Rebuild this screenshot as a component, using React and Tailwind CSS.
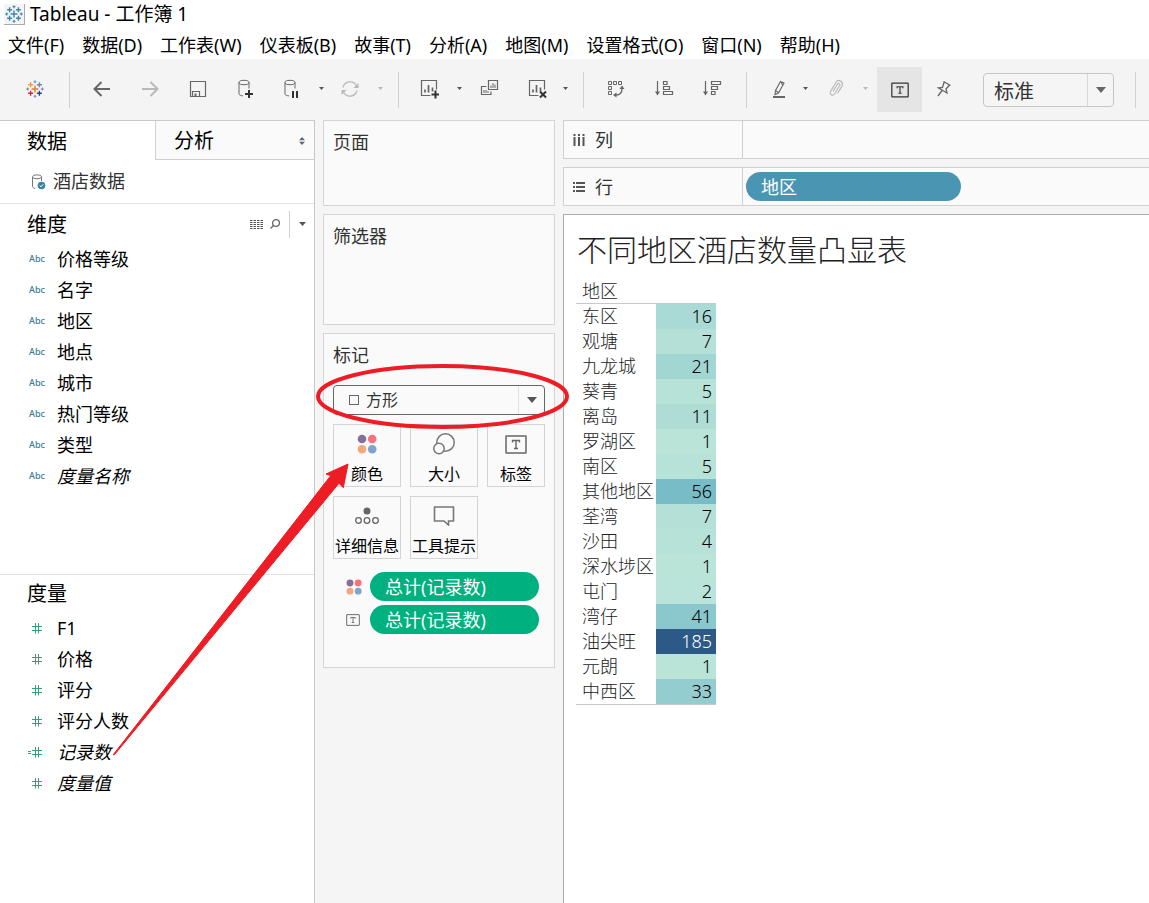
import React from "react";

const MENUS = ["文件(F)", "数据(D)", "工作表(W)", "仪表板(B)", "故事(T)", "分析(A)", "地图(M)", "设置格式(O)", "窗口(N)", "帮助(H)"];

const DIMENSIONS = [
  { name: "价格等级" },
  { name: "名字" },
  { name: "地区" },
  { name: "地点" },
  { name: "城市" },
  { name: "热门等级" },
  { name: "类型" },
  { name: "度量名称", italic: true },
];

const MEASURES = [
  { name: "F1" },
  { name: "价格" },
  { name: "评分" },
  { name: "评分人数" },
  { name: "记录数", italic: true, calc: true },
  { name: "度量值", italic: true },
];

const ROWS = [
  ["东区", 16, "bg-[#a9dad5]"],
  ["观塘", 7, "bg-[#b4e0d7]"],
  ["九龙城", 21, "bg-[#a2d6d3]"],
  ["葵青", 5, "bg-[#b6e2d8]"],
  ["离岛", 11, "bg-[#afddd6]"],
  ["罗湖区", 1, "bg-[#bbe4d9]"],
  ["南区", 5, "bg-[#b6e2d8]"],
  ["其他地区", 56, "bg-[#78bcc8]"],
  ["荃湾", 7, "bg-[#b4e0d7]"],
  ["沙田", 4, "bg-[#b7e2d8]"],
  ["深水埗区", 1, "bg-[#bbe4d9]"],
  ["屯门", 2, "bg-[#bae4d9]"],
  ["湾仔", 41, "bg-[#8ac8cd]"],
  ["油尖旺", 185, "bg-[#2c5985]"],
  ["元朗", 1, "bg-[#bbe4d9]"],
  ["中西区", 33, "bg-[#94cdcf]"],
];

function Logo({ colors, className }) {
  const [main, a, b, c, d, e, f] = colors;
  const plus = (x, y, r) => `M${x - r} ${y}h${2 * r}M${x} ${y - r}v${2 * r}`;
  return (
    <svg viewBox="0 0 18 18" className={className} fill="none" strokeWidth="1.4" aria-hidden="true">
      <path d={plus(9, 9, 3.4)} stroke={main} />
      <path d={plus(4.6, 4.7, 2.5)} stroke={a} />
      <path d={plus(13.4, 4.7, 2.5)} stroke={b} />
      <path d={plus(4.6, 13.3, 2.5)} stroke={c} />
      <path d={plus(13.4, 13.3, 2.5)} stroke={d} />
      <path d={plus(9, 1.8, 1.5) + plus(9, 16.2, 1.5)} stroke={e} strokeWidth="1.1" />
      <path d={plus(1.7, 9, 1.5) + plus(16.3, 9, 1.5)} stroke={f} strokeWidth="1.1" />
    </svg>
  );
}

function Icon({ children, className = "h-5 w-5", stroke = "#666" }) {
  return (
    <svg viewBox="0 0 20 20" className={className} fill="none" stroke={stroke} strokeWidth="1" aria-hidden="true">
      {children}
    </svg>
  );
}

function Caret({ color = "#555", className = "h-[3px] w-[5px]" }) {
  return (
    <svg viewBox="0 0 10 5" preserveAspectRatio="none" className={className} aria-hidden="true">
      <path d="M0 0h10L5 5z" fill={color} />
    </svg>
  );
}

function Tool({ label, className = "w-12", children }) {
  return (
    <button type="button" aria-label={label} className={`flex h-11 shrink-0 items-center justify-center pb-0.5 ${className}`}>
      {children}
    </button>
  );
}

function Divider({ className = "" }) {
  return <div className={`h-9 w-px shrink-0 bg-[#d0d0d0] ${className}`} />;
}

function LabelIcon({ className, color = "#666" }) {
  return (
    <svg viewBox="0 0 22 19" className={className} fill="none" stroke={color} aria-hidden="true">
      <rect x="1" y="1" width="20" height="17" rx="0.5" strokeWidth="1.5" />
      <path d="M7.5 7.5V5.5h7v2M11 5.5v8M9 13.5h4" strokeWidth="1.4" />
    </svg>
  );
}

function ColorIcon({ className }) {
  return (
    <svg viewBox="0 0 20 20" className={className} aria-hidden="true">
      <circle cx="5" cy="5" r="4.3" fill="#866f9b" />
      <circle cx="15.2" cy="5" r="4.3" fill="#f7717f" />
      <circle cx="5" cy="15.2" r="4.3" fill="#f3a77c" />
      <circle cx="15.2" cy="15.2" r="4.3" fill="#82a4cb" />
    </svg>
  );
}

function Cylinder() {
  return (
    <>
      <ellipse cx="8" cy="3.5" rx="5" ry="2.2" />
      <path d="M3 3.5v11.3c0 1.2 1.7 1.9 4 2.1M13 3.5v6" />
    </>
  );
}

function ChartFrame() {
  return (
    <>
      <path d="M11.5 16.5h-9v-15h15v9" strokeWidth="1.2" />
      <path d="M6 13.5v-3M9.5 13.5v-7.5M13.5 12.5v-4" strokeWidth="1.7" />
    </>
  );
}

function Toolbar() {
  return (
    <div role="toolbar" className="flex h-[61px] items-center overflow-hidden bg-[#f4f4f4] pl-[11px]">
      <Tool label="开始页面">
        <Logo className="h-[18px] w-[18px]" colors={["#eb7b30", "#ec9a3c", "#5c8ea5", "#c72f45", "#28467c", "#7a96b5", "#7b7fae"]} />
      </Tool>
      <Divider className="ml-[10px]" />
      <Tool label="撤消" className="ml-2 w-12">
        <Icon><path d="M18 10H2.500M9.500 3L2.500 10l7 7" strokeWidth="2" /></Icon>
      </Tool>
      <Tool label="重做">
        <Icon stroke="#b8b8b8"><path d="M2 10h15.5M10.5 3l7 7-7 7" strokeWidth="2" /></Icon>
      </Tool>
      <Tool label="保存">
        <Icon>
          <path d="M2.5 2.5h15v15h-15z" strokeWidth="1.2" />
          <path d="M4.5 17v-4.5h7V17" strokeWidth="1.2" />
          <path d="M6.5 14.5h2V17h-2z" fill="#666" stroke="none" />
        </Icon>
      </Tool>
      <Tool label="新建数据源">
        <Icon>
          <Cylinder />
          <path d="M9 15h8M13 11v8" stroke="#333" strokeWidth="2" />
        </Icon>
      </Tool>
      <Tool label="暂停自动更新" className="w-11">
        <Icon>
          <Cylinder />
          <path d="M11 12v7M15 12v7" stroke="#333" strokeWidth="2" />
        </Icon>
      </Tool>
      <Tool label="自动更新选项" className="w-3.5"><Caret /></Tool>
      <Tool label="运行更新" className="w-11">
        <Icon stroke="#b8b8b8">
          <path d="M3 8.5a7.200 7.200 0 0 1 13.5-1.5M17 11.5a7.200 7.200 0 0 1-13.5 1.5" strokeWidth="1.2" />
          <path d="M18.500 4v5h-5zM1.500 16v-5h5z" fill="#b8b8b8" stroke="none" />
        </Icon>
      </Tool>
      <Tool label="更新选项" className="w-4"><Caret color="#b8b8b8" /></Tool>
      <Divider className="ml-[10px]" />
      <Tool label="新建工作表" className="ml-1.5 w-12">
        <Icon>
          <ChartFrame />
          <path d="M12.5 15.5h8M16.5 11.5v8" stroke="#333" strokeWidth="2" />
        </Icon>
      </Tool>
      <Tool label="新建选项" className="w-3"><Caret /></Tool>
      <Tool label="复制工作表" className="w-[50px]">
        <Icon>
          <path d="M8.5 1.5h9v9h-9zM6.5 7.5h-5v8h9.5v-3" strokeWidth="1.2" />
          <path d="M11 9V6.5M13 9V4M15 9V5.5M4 14v-3M6 14v-3M8 14v-2" />
        </Icon>
      </Tool>
      <Tool label="清除工作表" className="w-11">
        <Icon>
          <ChartFrame />
          <path d="M13 12.5l6 6M19 12.5l-6 6" stroke="#333" strokeWidth="2" />
        </Icon>
      </Tool>
      <Tool label="清除选项" className="w-3"><Caret /></Tool>
      <Divider className="ml-3" />
      <Tool label="交换行和列" className="ml-2 w-12">
        <Icon>
          <path d="M2.5 2.5h3v3h-3zM7.5 2.5h3v3h-3zM12.5 2.5h3v3h-3zM2.5 7.5h3v3h-3zM2.5 12.5h3v3h-3z" />
          <path d="M16 9.5c0 4-2 6.500-6 6.500" strokeWidth="1.3" />
          <path d="M16 6.5l2.5 3.5h-5zM7 16l3.5-2.5v5z" fill="#666" stroke="none" />
        </Icon>
      </Tool>
      <Tool label="升序排序">
        <Icon>
          <path d="M3.5 2v12M9.5 2.5h3.5v3H9.500zM9.5 7.5h6v3h-6zM9.5 12.5h9v3h-9z" strokeWidth="1.2" />
          <path d="M1 12.5h5l-2.5 4z" fill="#666" stroke="none" />
        </Icon>
      </Tool>
      <Tool label="降序排序">
        <Icon>
          <path d="M3.5 2v12M9.5 12.5h3.5v3H9.500zM9.5 7.5h6v3h-6zM9.5 2.5h9v3h-9z" strokeWidth="1.2" />
          <path d="M1 12.5h5l-2.5 4z" fill="#666" stroke="none" />
        </Icon>
      </Tool>
      <Divider className="ml-[10px]" />
      <Tool label="突出显示" className="ml-2.5 w-11">
        <Icon>
          <path d="M11.5 2.5l3.5 1.5-5.5 10-3.500 1.5.5-4z M12 3l2 3.500M6.500 11.500l3 2" strokeWidth="1.1" />
          <path d="M4 18h12" strokeWidth="2" />
        </Icon>
      </Tool>
      <Tool label="突出显示选项" className="w-2"><Caret /></Tool>
      <Tool label="组成员" className="ml-1 w-12">
        <Icon stroke="#b8b8b8">
          <path d="M6 12.500l4.500-7.500c1-1.500 3 0 2.200 1.500L7.500 15c-1.800 2.500-5.500.5-4-2.500l5.500-9.300C11-.3 17 2.500 15 7l-4.500 7.500" strokeWidth="1.2" />
        </Icon>
      </Tool>
      <Tool label="组成员选项" className="w-2"><Caret color="#b8b8b8" /></Tool>
      <button type="button" aria-label="显示标记标签" aria-pressed="true" className="ml-2 flex h-[45px] w-[45px] shrink-0 items-center justify-center bg-[#e5e5e5]">
        <LabelIcon className="h-4 w-[18px]" color="#333" />
      </button>
      <Tool label="固定轴" className="w-11">
        <Icon>
          <path d="M9.500 2.500l7 4M10 3.500l-1.500 5-4 .5 8.500 5-1-4 3.500-4M8 11.500L4 17" strokeWidth="1.3" />
        </Icon>
      </Tool>
      <div className="relative ml-[17px] h-[34px] w-[131px] shrink-0">
        <select aria-label="适合" className="h-full w-full appearance-none rounded-sm border border-[#c6c6c6] bg-[#f5f5f5] pt-0.5 pl-[10px] text-[20px] leading-8 text-[#333]">
          <option>标准</option>
        </select>
        <div className="pointer-events-none absolute inset-y-px right-px flex w-[26px] items-center justify-center border-l border-[#d8d8d8]">
          <Caret className="h-1.5 w-2.5" color="#666" />
        </div>
      </div>
      <Divider className="ml-[21px]" />
    </div>
  );
}

function HashIcon({ calc }) {
  return (
    <svg viewBox="0 0 16 12" className="h-3 w-4" fill="none" stroke="#3a9f78" aria-hidden="true">
      <path d="M5 4.5h10M5 8.500h10M8.500 1v10.500M11.500 1v10.500" />
      {calc && <path d="M1 5.500h3M1 7.500h3" />}
    </svg>
  );
}

function Field({ name, italic, children }) {
  return (
    <li className="flex h-[31px] items-center pb-0.5">
      <span className="flex w-[30px] shrink-0">{children}</span>
      <span className={`text-[18px] leading-7 ${italic ? "italic" : ""}`}>{name}</span>
    </li>
  );
}

function DataPane() {
  return (
    <aside className="flex w-[315px] shrink-0 flex-col border-t border-r border-[#c9c9c9] bg-white text-black">
      <div role="tablist" className="flex h-[39px] text-[20px]">
        <button type="button" role="tab" aria-selected="true" className="w-[155px] pt-0.5 pl-[27px] text-left">数据</button>
        <button type="button" role="tab" aria-selected="false" className="flex flex-1 items-center justify-between border-b border-l border-[#d0d0d0] bg-[#fafafa] pt-0.5 pr-2 pl-[18px]">
          分析
          <svg viewBox="0 0 8 8" className="h-2 w-2" fill="#5b6b75" aria-hidden="true">
            <path d="M1 3.200h6L4 0zM1 4.800h6L4 8z" />
          </svg>
        </button>
      </div>
      <div className="flex h-11 items-center border-b border-[#e2e2e2] pl-[30px] text-[18px] text-[#333]">
        <svg viewBox="0 0 16 16" className="mr-[7px] h-4 w-4" fill="none" stroke="#777" aria-hidden="true">
          <ellipse cx="7" cy="2.800" rx="4.500" ry="2" />
          <path d="M2.500 3v9.500c0 1 1 1.600 2.800 1.900M11.500 3v4" />
          <circle cx="11.500" cy="11.500" r="3.800" fill="#3a84a3" stroke="none" />
          <path d="M9.700 11.500l1.300 1.300 2.200-2.500" stroke="#fff" />
        </svg>
        酒店数据
      </div>
      <section className="flex h-[371px] flex-col border-b border-[#e2e2e2]">
        <div className="flex h-10 items-center">
          <h2 className="flex-1 pt-0.5 pl-[27px] text-[20px] leading-7">维度</h2>
          <button type="button" aria-label="查看数据" className="mr-[6px]">
            <svg viewBox="0 0 13 11" className="h-[11px] w-[13px]" stroke="#555" aria-hidden="true">
              <path d="M0 1.500h13M0 3.500h13M0 5.500h13M0 7.500h13M0 9.500h13" strokeDasharray="2.500 1" />
            </svg>
          </button>
          <button type="button" aria-label="搜索" className="mr-2">
            <svg viewBox="0 0 12 12" className="h-3 w-3" fill="none" stroke="#666" strokeWidth="1.3" aria-hidden="true">
              <circle cx="7" cy="5" r="3.400" />
              <path d="M4.500 7.500L1.500 10.500" />
            </svg>
          </button>
          <div className="h-[27px] w-px bg-[#d0d0d0]" />
          <button type="button" aria-label="维度菜单" className="flex h-7 w-6 items-center justify-center">
            <Caret className="h-1 w-[7px]" />
          </button>
        </div>
        <ul className="pl-[27px]">
          {DIMENSIONS.map((f) => (
            <Field key={f.name} {...f}>
              <span className="pl-0.5 text-[9px] leading-4 font-medium text-[#3a7d99]">Abc</span>
            </Field>
          ))}
        </ul>
      </section>
      <section>
        <h2 className="h-[38px] pl-[27px] text-[20px] leading-[38px]">度量</h2>
        <ul className="pl-[27px]">
          {MEASURES.map((f) => (
            <Field key={f.name} {...f}>
              <HashIcon calc={f.calc} />
            </Field>
          ))}
        </ul>
      </section>
    </aside>
  );
}

function Card({ title, className, children }) {
  return (
    <section className={`border border-[#d4d4d4] bg-[#fafafa] px-[9px] ${className}`}>
      <h2 className="h-[42px] text-[18px] leading-[43px] text-[#333]">{title}</h2>
      {children}
    </section>
  );
}

function MarkButton({ label, className = "w-[68px]", children }) {
  return (
    <button type="button" className={`flex h-[63px] flex-col items-center border border-[#d4d4d4] bg-[#fafafa] pt-2 text-[16px] leading-6 whitespace-nowrap text-black ${className}`}>
      <span className="mb-[7px] flex h-[22px] items-center">{children}</span>
      {label}
    </button>
  );
}

function MarksPane() {
  return (
    <div className="flex w-[248px] shrink-0 flex-col gap-2 px-2">
      <Card title="页面" className="h-[86px]" />
      <Card title="筛选器" className="h-[111px]" />
      <Card title="标记" className="h-[335px]">
        <div className="relative mt-[9px] h-[30px] w-[212px]">
          <select aria-label="标记类型" className="h-full w-full appearance-none rounded-sm border border-[#666] bg-[#fafafa] pl-8 text-[16px] leading-7 text-[#333]">
            <option>方形</option>
          </select>
          <div className="pointer-events-none absolute top-[10px] left-4 h-[10px] w-[10px] border border-[#666]" />
          <div className="pointer-events-none absolute inset-y-px right-px flex w-[26px] items-center justify-center border-l border-[#e0e0e0]">
            <Caret className="h-1.5 w-2.5" />
          </div>
        </div>
        <div className="mt-[9px] flex flex-wrap gap-[9px]">
          <MarkButton label="颜色"><ColorIcon className="h-5 w-5" /></MarkButton>
          <MarkButton label="大小">
            <svg viewBox="0 0 22 22" className="h-[22px] w-[22px]" fill="#fafafa" stroke="#777" strokeWidth="1.500" aria-hidden="true">
              <circle cx="12.500" cy="9.500" r="8.700" />
              <circle cx="6" cy="15.500" r="5.200" />
            </svg>
          </MarkButton>
          <MarkButton label="标签" className="w-[58px]"><LabelIcon className="h-[19px] w-[22px]" /></MarkButton>
          <MarkButton label="详细信息">
            <svg viewBox="0 0 24 18" className="h-[18px] w-6" fill="none" stroke="#666" strokeWidth="1.300" aria-hidden="true">
              <circle cx="12" cy="4" r="3.500" fill="#666" stroke="none" />
              <circle cx="3.500" cy="13.500" r="2.800" />
              <circle cx="12" cy="13.500" r="2.800" />
              <circle cx="20.500" cy="13.500" r="2.800" />
            </svg>
          </MarkButton>
          <MarkButton label="工具提示">
            <svg viewBox="0 0 22 20" className="h-5 w-[22px]" fill="none" stroke="#777" strokeWidth="1.600" aria-hidden="true">
              <path d="M1.500 1h19v14h-5v4l-4.500-4H1.500z" />
            </svg>
          </MarkButton>
        </div>
        <ul className="mt-[13px] flex flex-col gap-1">
          <li className="flex items-center pl-[13px]">
            <span className="w-6"><ColorIcon className="h-4 w-4" /></span>
            <button type="button" className="h-[29px] w-[169px] rounded-full bg-[#00b180] pl-[15px] text-left text-[18px] leading-7 text-white">总计(记录数)</button>
          </li>
          <li className="flex items-center pl-[13px]">
            <span className="w-6"><LabelIcon className="h-3 w-[14px]" /></span>
            <button type="button" className="h-[29px] w-[169px] rounded-full bg-[#00b180] pl-[15px] text-left text-[18px] leading-7 text-white">总计(记录数)</button>
          </li>
        </ul>
      </Card>
    </div>
  );
}

function Shelf({ label, icon, children }) {
  return (
    <div className="mb-2 flex h-[39px] border border-r-0 border-[#d0d0d0] bg-[#fafafa]">
      <div className="flex w-[179px] shrink-0 items-center gap-[9px] border-r border-[#d0d0d0] pl-2 text-[18px] text-[#333]">
        <svg viewBox="0 0 14 14" className="h-[14px] w-[14px]" stroke="#555" strokeWidth="2" aria-hidden="true">
          <path d={icon} />
        </svg>
        <span className="pt-0.5">{label}</span>
      </div>
      <div className="flex flex-1 items-center pl-[3px]">{children}</div>
    </div>
  );
}

function Sheet() {
  return (
    <main className="flex min-w-0 flex-1 flex-col">
      <Shelf label="列" icon="M2.500 1v2M2.500 4v9M7 1v2M7 4v9M11.500 1v2M11.500 4v9" />
      <Shelf label="行" icon="M1 3h2M4 3h9M1 7h2M4 7h9M1 11h2M4 11h9">
        <button type="button" className="h-[29px] w-[215px] rounded-full bg-[#4a96b2] pl-[15px] text-left text-[18px] leading-7 text-white">地区</button>
      </Shelf>
      <div className="flex-1 border-t border-l border-[#adadad] bg-white pl-3">
        <h1 className="mt-[13px] pl-px text-[30px] leading-[44px] font-light text-[#222]">不同地区酒店数量凸显表</h1>
        <table className="mt-[7px] border-b border-[#c8c8c8] text-[18px] leading-[25px] text-[#222]">
          <thead>
            <tr className="border-b border-[#c8c8c8] leading-6">
              <th scope="col" className="w-20 p-0 pl-[6px] text-left font-light">地区</th>
              <td className="w-[60px] p-0" />
            </tr>
          </thead>
          <tbody>
            {ROWS.map(([name, value, color]) => (
              <tr key={name}>
                <th scope="row" className="p-0 pl-[6px] text-left font-light whitespace-nowrap">{name}</th>
                <td className={`p-0 pr-1 text-right font-light ${color} ${value > 100 ? "text-white" : "text-black"}`}>{value}</td>
              </tr>
            ))}
          </tbody>
        </table>
      </div>
    </main>
  );
}

function Annotations() {
  return (
    <svg className="pointer-events-none absolute top-0 left-0 h-[903px] w-[600px]" viewBox="0 0 600 903" aria-hidden="true">
      <ellipse cx="442.500" cy="396.500" rx="124.500" ry="30.500" fill="none" stroke="#ee1c25" strokeWidth="4" />
      <path d="M113 755L330.700 475.700L326 474L348 464L343.300 487.700L339 483.300L115 754Z" fill="#ee1c25" stroke="#ee1c25" strokeWidth="1" strokeLinejoin="round" />
    </svg>
  );
}

export default function App() {
  return (
    <div className="relative flex min-h-screen flex-col overflow-hidden bg-[#f5f5f5] font-['Noto_Sans','Noto_Sans_CJK_SC',sans-serif]">
      <header className="bg-white text-black">
        <div className="flex h-7 items-center gap-[5px] pl-1 text-[19px] leading-7">
          <span className="flex h-[21px] w-[21px] items-center justify-center border-r border-b border-[#aaa] bg-[#f4f4f4]">
            <Logo className="h-[18px] w-[18px]" colors={["#3f84aa", "#3f84aa", "#3f84aa", "#3f84aa", "#3f84aa", "#3f84aa", "#3f84aa"]} />
          </span>
          Tableau - 工作簿 1
        </div>
        <nav className="flex h-[31px] items-center gap-[18px] pt-0.5 pl-2 text-[18px] leading-7 whitespace-nowrap">
          {MENUS.map((m) => (
            <button key={m} type="button">{m}</button>
          ))}
        </nav>
      </header>
      <Toolbar />
      <div className="flex flex-1">
        <DataPane />
        <MarksPane />
        <Sheet />
      </div>
      <Annotations />
    </div>
  );
}
